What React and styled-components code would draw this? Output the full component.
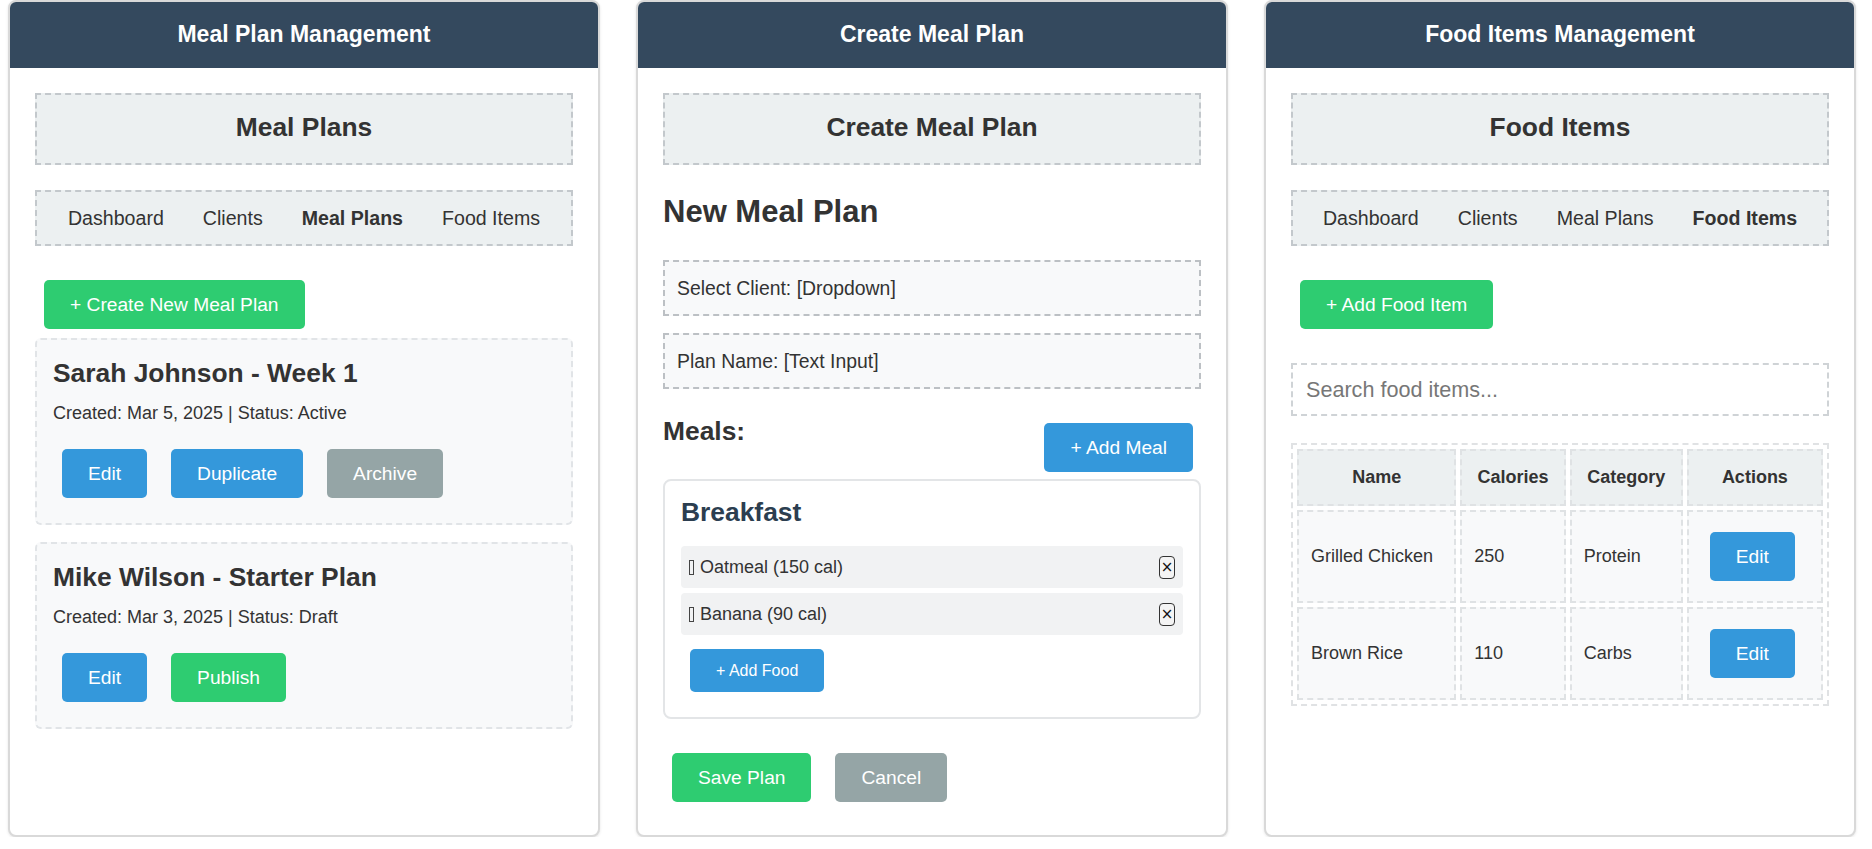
import styled, { createGlobalStyle, css } from 'styled-components';

const GlobalStyle = createGlobalStyle`
  body {
    margin: 0;
    background: #fff;
    color: #333;
    font-family: "Liberation Sans", Arial, sans-serif;
  }
  * {
    box-sizing: border-box;
  }
`;

const Page = styled.div`
  display: flex;
  align-items: flex-start;
  gap: 36px;
  padding: 0 0 0 8px;
`;

const Panel = styled.section`
  width: 592px;
  height: 837px;
  border: 2px solid #d9d9d9;
  border-radius: 8px;
  overflow: hidden;
  background: #fff;
  box-shadow: 0 1px 3px rgba(0, 0, 0, 0.1);
`;

const PanelHeader = styled.header`
  background: #34495e;
  color: #fff;
  text-align: center;
  font-size: 23px;
  font-weight: bold;
  line-height: 26px;
  padding: 19px 0 21px;
`;

const PanelBody = styled.div`
  padding: 25px;
`;

const TitleBox = styled.div`
  background: #ecf0f1;
  border: 2px dashed #c3c8cc;
  text-align: center;
  font-size: 26.4px;
  font-weight: bold;
  line-height: 30px;
  padding: 17px 19px 21px;
  margin-bottom: 25px;
`;

const Nav = styled.nav`
  display: flex;
  justify-content: center;
  gap: 39px;
  background: #ecf0f1;
  border: 2px dashed #c3c8cc;
  padding: 15px;
  font-size: 19.6px;
  line-height: 22px;
  margin-bottom: 25px;
`;

const NavItem = styled.span`
  font-weight: ${(p) => (p.$active ? 'bold' : 'normal')};
`;

const colors = {
  blue: '#3498db',
  green: '#2ecc71',
  gray: '#95a5a6',
};

const Button = styled.button`
  display: inline-block;
  border: none;
  border-radius: 5px;
  background: ${(p) => colors[p.$variant || 'blue']};
  color: #fff;
  font-family: inherit;
  font-size: 19.2px;
  line-height: 23px;
  padding: 13px 26px;
  margin: 9px;
  cursor: pointer;
  ${(p) =>
    p.$small &&
    css`
      font-size: 16px;
      line-height: 19px;
      padding: 12px 26px;
    `}
`;

const ButtonBlock = styled.div`
  display: flex;
`;

const ButtonRow = styled.div`
  display: flex;
  gap: 6px;
`;

const PlanCard = styled.div`
  background: #f8f9fa;
  border: 2px dashed #e1e4e7;
  border-radius: 6px;
  padding: 18px 16px 16px;
  margin-bottom: 17px;
`;

const CardTitle = styled.h3`
  margin: 0 0 15px;
  font-size: 26.4px;
  line-height: 30px;
`;

const Meta = styled.p`
  margin: 0 0 16px;
  font-size: 18px;
  line-height: 21px;
`;

const PageHeading = styled.h2`
  margin: 29px 0 30px;
  font-size: 31px;
  line-height: 36px;
`;

const FieldGroup = styled.div`
  display: flex;
  flex-direction: column;
  gap: 17px;
  margin-bottom: 27px;
`;

const Field = styled.div`
  background: #f8f9fa;
  border: 2px dashed #bcc0c4;
  padding: 15px 12px;
  font-size: 19.4px;
  line-height: 22px;
`;

const MealsRow = styled.div`
  display: flex;
  justify-content: space-between;
  align-items: flex-start;

  ${Button} {
    margin: 7px 8px 7px 9px;
  }
`;

const SectionLabel = styled.h3`
  margin: 0;
  font-size: 26.4px;
  line-height: 30px;
`;

const MealCard = styled.div`
  border: 2px solid #e3e5e7;
  border-radius: 8px;
  padding: 16px 16px 16px;
  background: #fff;
`;

const MealTitle = styled.h4`
  margin: 0 0 19px;
  color: #2c3e50;
  font-size: 26.4px;
  line-height: 30px;
`;

const FoodRow = styled.div`
  display: flex;
  align-items: center;
  justify-content: space-between;
  height: 42px;
  padding: 0 8px;
  margin-bottom: 5px;
  background: #f1f2f3;
  border-radius: 4px;
  font-size: 18px;
`;

const FoodLabel = styled.span`
  display: flex;
  align-items: center;
`;

const Tofu = styled.span`
  display: inline-block;
  width: 5px;
  height: 15px;
  border: 1px solid #444;
  margin-right: 6px;
`;

const RemoveButton = styled.button`
  border: 1.5px solid #333;
  border-radius: 4px;
  background: #f4f4f4;
  color: #111;
  font-family: "DejaVu Sans", sans-serif;
  font-size: 15px;
  line-height: 21px;
  padding: 0;
  width: 16px;
  text-align: center;
`;

const FormActions = styled.div`
  display: flex;
  gap: 6px;
  margin-top: 25px;
`;

const SearchInput = styled.input`
  display: block;
  width: 100%;
  margin: 25px 0 27px;
  border: 2px dashed #cfd3d6;
  padding: 12px 13px;
  font-family: inherit;
  font-size: 21.6px;
  line-height: 25px;
  color: #333;
  background: #fff;
  outline: none;

  &::placeholder {
    color: #777;
  }
`;

const Table = styled.table`
  width: 100%;
  table-layout: fixed;
  border: 2px dashed #e0e2e4;
  border-spacing: 4px;
`;

const Th = styled.th`
  background: #ecf0f1;
  border: 2px dashed #dfe2e4;
  padding: 16px 6px 16px;
  font-size: 18px;
  line-height: 21px;
  text-align: center;
`;

const Td = styled.td`
  background: #f8f9fa;
  border: 2px dashed #dfe2e4;
  padding: 11px 12px;
  font-size: 18px;
  line-height: 21px;
  vertical-align: middle;
`;

const plans = [
  {
    title: 'Sarah Johnson - Week 1',
    meta: 'Created: Mar 5, 2025 | Status: Active',
    actions: [
      ['Edit', 'blue'],
      ['Duplicate', 'blue'],
      ['Archive', 'gray'],
    ],
  },
  {
    title: 'Mike Wilson - Starter Plan',
    meta: 'Created: Mar 3, 2025 | Status: Draft',
    actions: [
      ['Edit', 'blue'],
      ['Publish', 'green'],
    ],
  },
];

const foods = [
  { name: 'Grilled Chicken', calories: 250, category: 'Protein' },
  { name: 'Brown Rice', calories: 110, category: 'Carbs' },
];

const navItems = ['Dashboard', 'Clients', 'Meal Plans', 'Food Items'];

const SubNav = ({ active }) => (
  <Nav>
    {navItems.map((item) => (
      <NavItem key={item} $active={item === active}>
        {item}
      </NavItem>
    ))}
  </Nav>
);

const MealPlansPanel = () => (
  <Panel>
    <PanelHeader>Meal Plan Management</PanelHeader>
    <PanelBody>
      <TitleBox>Meal Plans</TitleBox>
      <SubNav active="Meal Plans" />
      <ButtonBlock>
        <Button $variant="green">+ Create New Meal Plan</Button>
      </ButtonBlock>
      {plans.map((plan) => (
        <PlanCard key={plan.title}>
          <CardTitle>{plan.title}</CardTitle>
          <Meta>{plan.meta}</Meta>
          <ButtonRow>
            {plan.actions.map(([label, variant]) => (
              <Button key={label} $variant={variant}>
                {label}
              </Button>
            ))}
          </ButtonRow>
        </PlanCard>
      ))}
    </PanelBody>
  </Panel>
);

const CreatePlanPanel = () => (
  <Panel>
    <PanelHeader>Create Meal Plan</PanelHeader>
    <PanelBody>
      <TitleBox>Create Meal Plan</TitleBox>
      <PageHeading>New Meal Plan</PageHeading>
      <FieldGroup>
        <Field>Select Client: [Dropdown]</Field>
        <Field>Plan Name: [Text Input]</Field>
      </FieldGroup>
      <MealsRow>
        <SectionLabel>Meals:</SectionLabel>
        <Button>+ Add Meal</Button>
      </MealsRow>
      <MealCard>
        <MealTitle>Breakfast</MealTitle>
        {['Oatmeal (150 cal)', 'Banana (90 cal)'].map((food) => (
          <FoodRow key={food}>
            <FoodLabel>
              <Tofu />
              {food}
            </FoodLabel>
            <RemoveButton>×</RemoveButton>
          </FoodRow>
        ))}
        <ButtonBlock>
          <Button $small>+ Add Food</Button>
        </ButtonBlock>
      </MealCard>
      <FormActions>
        <Button $variant="green">Save Plan</Button>
        <Button $variant="gray">Cancel</Button>
      </FormActions>
    </PanelBody>
  </Panel>
);

const FoodItemsPanel = () => (
  <Panel>
    <PanelHeader>Food Items Management</PanelHeader>
    <PanelBody>
      <TitleBox>Food Items</TitleBox>
      <SubNav active="Food Items" />
      <ButtonBlock>
        <Button $variant="green">+ Add Food Item</Button>
      </ButtonBlock>
      <SearchInput placeholder="Search food items..." />
      <Table>
        <colgroup>
          <col style={{ width: '31%' }} />
          <col style={{ width: '20.5%' }} />
          <col style={{ width: '22%' }} />
          <col style={{ width: '26.5%' }} />
        </colgroup>
        <thead>
          <tr>
            <Th>Name</Th>
            <Th>Calories</Th>
            <Th>Category</Th>
            <Th>Actions</Th>
          </tr>
        </thead>
        <tbody>
          {foods.map((food) => (
            <tr key={food.name}>
              <Td>{food.name}</Td>
              <Td>{food.calories}</Td>
              <Td>{food.category}</Td>
              <Td>
                <Button>Edit</Button>
              </Td>
            </tr>
          ))}
        </tbody>
      </Table>
    </PanelBody>
  </Panel>
);

const App = () => (
  <>
    <GlobalStyle />
    <Page>
      <MealPlansPanel />
      <CreatePlanPanel />
      <FoodItemsPanel />
    </Page>
  </>
);

export default App;
